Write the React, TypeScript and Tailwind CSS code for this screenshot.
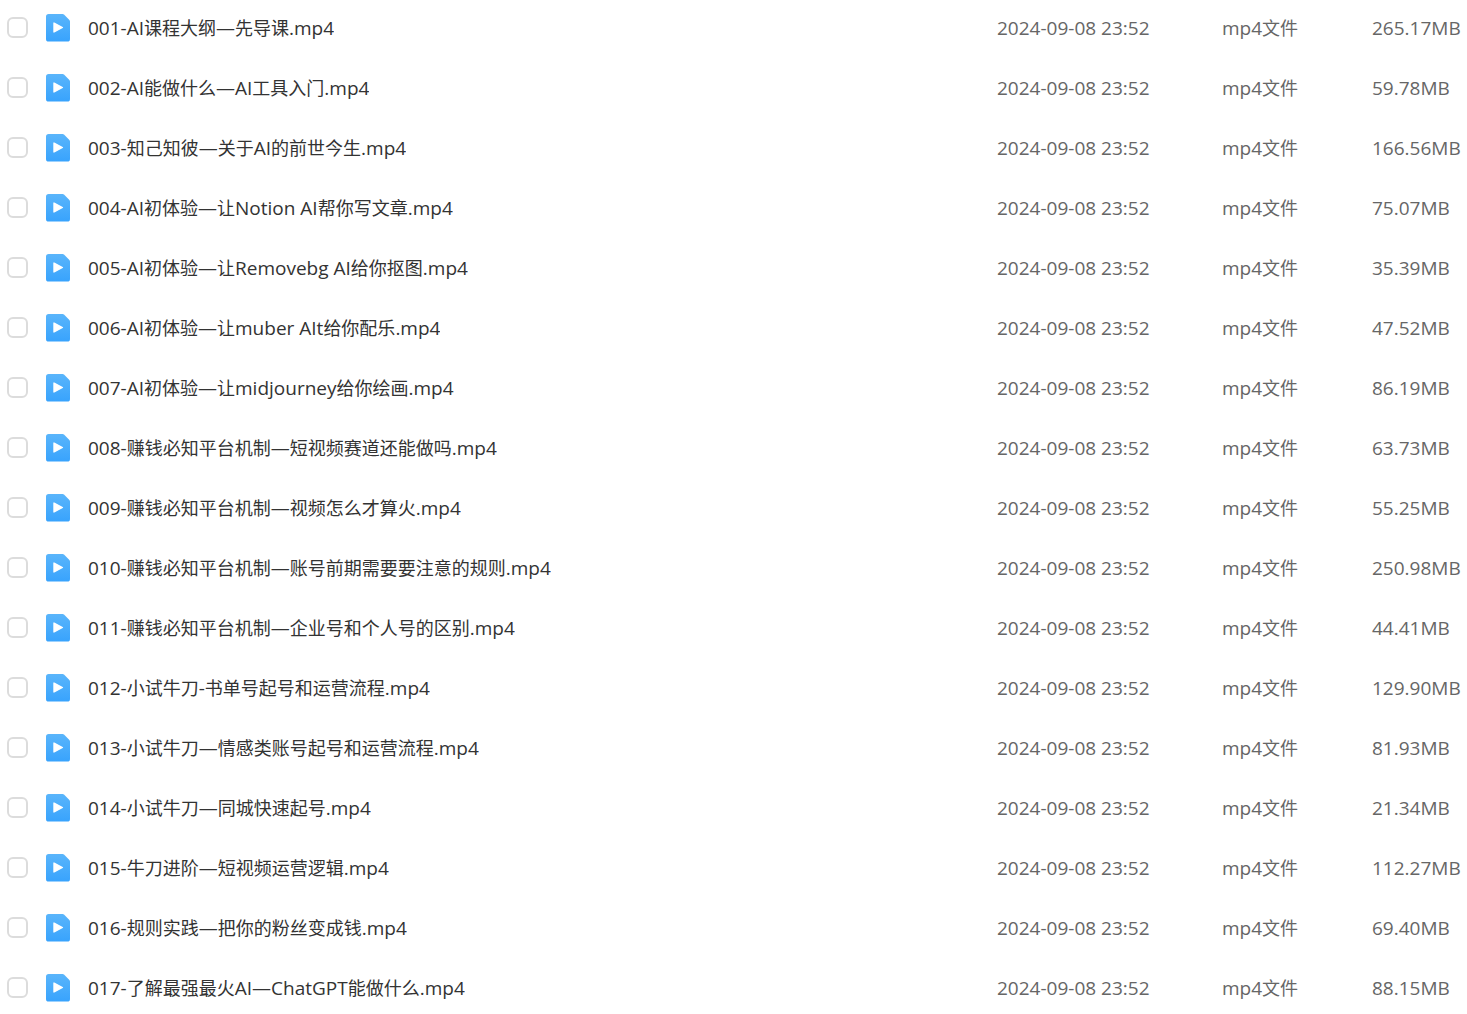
import { useState } from "react";

type VideoFile = {
  name: string;
  size: string;
};

const MODIFIED_AT = "2024-09-08 23:52";

const files: VideoFile[] = [
  { name: "001-AI课程大纲—先导课.mp4", size: "265.17MB" },
  { name: "002-AI能做什么—AI工具入门.mp4", size: "59.78MB" },
  { name: "003-知己知彼—关于AI的前世今生.mp4", size: "166.56MB" },
  { name: "004-AI初体验—让Notion AI帮你写文章.mp4", size: "75.07MB" },
  { name: "005-AI初体验—让Removebg AI给你抠图.mp4", size: "35.39MB" },
  { name: "006-AI初体验—让muber AIt给你配乐.mp4", size: "47.52MB" },
  { name: "007-AI初体验—让midjourney给你绘画.mp4", size: "86.19MB" },
  { name: "008-赚钱必知平台机制—短视频赛道还能做吗.mp4", size: "63.73MB" },
  { name: "009-赚钱必知平台机制—视频怎么才算火.mp4", size: "55.25MB" },
  { name: "010-赚钱必知平台机制—账号前期需要要注意的规则.mp4", size: "250.98MB" },
  { name: "011-赚钱必知平台机制—企业号和个人号的区别.mp4", size: "44.41MB" },
  { name: "012-小试牛刀-书单号起号和运营流程.mp4", size: "129.90MB" },
  { name: "013-小试牛刀—情感类账号起号和运营流程.mp4", size: "81.93MB" },
  { name: "014-小试牛刀—同城快速起号.mp4", size: "21.34MB" },
  { name: "015-牛刀进阶—短视频运营逻辑.mp4", size: "112.27MB" },
  { name: "016-规则实践—把你的粉丝变成钱.mp4", size: "69.40MB" },
  { name: "017-了解最强最火AI—ChatGPT能做什么.mp4", size: "88.15MB" },
];

function VideoIcon() {
  return (
    <svg width="24" height="28" viewBox="0 0 24 28" className="shrink-0" aria-hidden="true">
      <defs>
        <linearGradient id="video-fill" x1="0" y1="0" x2="0" y2="1">
          <stop offset="0" stopColor="#5ab5fb" />
          <stop offset="1" stopColor="#38a3fd" />
        </linearGradient>
      </defs>
      <path
        d="M2.6 0H16.6a2 2 0 0 1 1.4.6L23.4 6a2 2 0 0 1 .6 1.4V25a2.6 2.6 0 0 1-2.6 2.6H2.6A2.6 2.6 0 0 1 0 25V2.6A2.6 2.6 0 0 1 2.6 0Z"
        fill="url(#video-fill)"
      />
      <path
        d="M8 9v9l8.4-4.5Z"
        fill="#fff"
        stroke="#fff"
        strokeWidth="1.4"
        strokeLinejoin="round"
      />
    </svg>
  );
}

// Latin runs are set one step larger so they sit level with the Chinese text
function MixedText({ text }: { text: string }) {
  return (
    <>
      {text.split(/([\x20-\x7e—]+)/).map((part, i) =>
        i % 2 === 1 ? (
          <span key={i} className="text-[19px]">
            {part}
          </span>
        ) : (
          part
        )
      )}
    </>
  );
}

export default function App() {
  const [selected, setSelected] = useState<string[]>([]);

  const toggle = (name: string) => {
    setSelected((prev) =>
      prev.includes(name) ? prev.filter((n) => n !== name) : [...prev, name]
    );
  };

  return (
    <main className="h-screen overflow-hidden bg-white font-['Open_Sans','Noto_Sans_CJK_SC',sans-serif]">
      <table className="w-full table-fixed text-left text-lg/7 text-[#666]">
        <colgroup>
          <col />
          <col className="w-[225px]" />
          <col className="w-[150px]" />
          <col className="w-[95px]" />
        </colgroup>
        <tbody>
          {files.map((file) => (
            <tr key={file.name} className="h-[60px]">
              <td className="pb-1 pl-[7px]">
                <div className="flex items-center">
                  <input
                    id={file.name}
                    type="checkbox"
                    checked={selected.includes(file.name)}
                    onChange={() => toggle(file.name)}
                    className="mb-px size-[21px] shrink-0 appearance-none rounded-md border-2 border-[#dcdcdc] bg-white checked:border-[#38a3fd] checked:bg-[#38a3fd]"
                  />
                  <label
                    htmlFor={file.name}
                    className="ml-[18px] flex min-w-0 items-center gap-[18px] text-[#333]"
                  >
                    <VideoIcon />
                    <span className="truncate">
                      <MixedText text={file.name} />
                    </span>
                  </label>
                </div>
              </td>
              <td className="pb-1 whitespace-nowrap">
                <MixedText text={MODIFIED_AT} />
              </td>
              <td className="pb-1 whitespace-nowrap">
                <MixedText text="mp4文件" />
              </td>
              <td className="pb-1 whitespace-nowrap">
                <MixedText text={file.size} />
              </td>
            </tr>
          ))}
        </tbody>
      </table>
    </main>
  );
}
